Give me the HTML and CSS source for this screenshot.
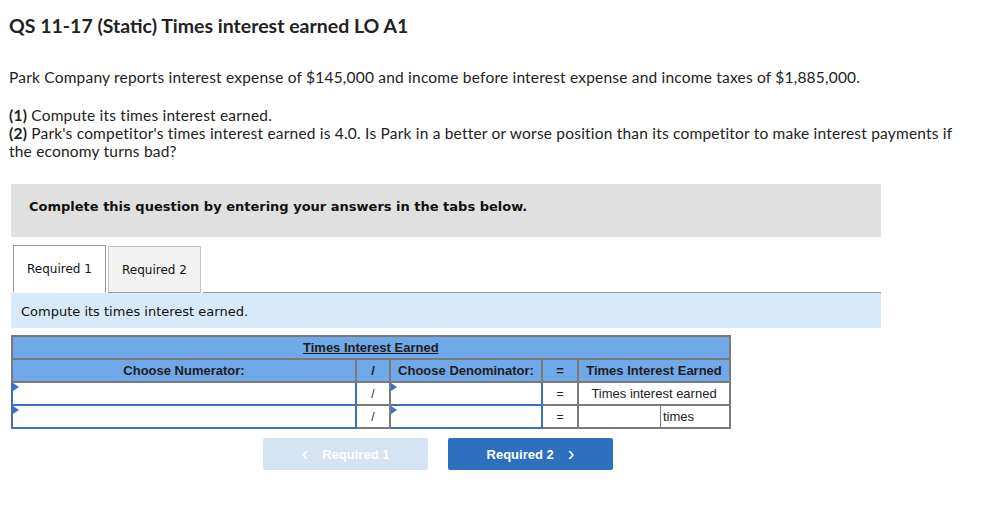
FILE: index.html
```html
<!DOCTYPE html>
<html>
<head>
<meta charset="utf-8">
<link rel="stylesheet" href="styles.css">
</head>
<body>
<div class="page">
  <h1 class="title">QS 11-17 (Static) Times interest earned LO A1</h1>
  <p class="intro">Park Company reports interest expense of $145,000 and income before interest expense and income taxes of $1,885,000.</p>
  <p class="reqs"><b>(1)</b> Compute its times interest earned.<br><b>(2)</b> Park's competitor's times interest earned is 4.0. Is Park in a better or worse position than its competitor to make interest payments if the economy turns bad?</p>

  <div class="instr">Complete this question by entering your answers in the tabs below.</div>

  <div class="tabs">
    <div class="tab active">Required 1</div>
    <div class="tab">Required 2</div>
    <div class="tabline"></div>
  </div>
  <div class="prompt">Compute its times interest earned.</div>

  <table class="calc">
    <tr class="hd"><th colspan="5" class="cap"><u>Times Interest Earned</u></th></tr>
    <tr class="hd">
      <th class="c-num">Choose Numerator:</th>
      <th class="c-op">/</th>
      <th class="c-den">Choose Denominator:</th>
      <th class="c-eq">=</th>
      <th class="c-res">Times Interest Earned</th>
    </tr>
    <tr>
      <td class="inp"><span class="flag"></span></td>
      <td class="op">/</td>
      <td class="inp"><span class="flag"></span></td>
      <td class="op">=</td>
      <td class="res">Times interest earned</td>
    </tr>
    <tr>
      <td class="inp"><span class="flag"></span></td>
      <td class="op">/</td>
      <td class="inp"><span class="flag"></span></td>
      <td class="op">=</td>
      <td class="split"><div class="splitrow"><span class="blank"></span><span class="unit">times</span></div></td>
    </tr>
  </table>

  <div class="nav">
    <div class="btn disabled"><span class="chev">&lsaquo;</span>Required 1</div>
    <div class="btn primary">Required 2<span class="chev r">&rsaquo;</span></div>
  </div>
</div>
</body>
</html>
```
FILE: styles.css
```css
html, body { margin: 0; padding: 0; background: #fff; }
.page { padding: 0 0 0 9px; font-family: "Lato", "Liberation Sans", sans-serif; color: #222; }
.title { margin: 0; padding-top: 15px; font-size: 19.5px; font-weight: 700; line-height: 22px; height: 22px; color: #222; }
.intro { margin: 31px 0 0; font-size: 15.5px; letter-spacing: 0.2px; line-height: 18px; }
.reqs { margin: 20px 0 0; font-size: 15.5px; letter-spacing: 0.2px; line-height: 18px; padding-right: 18px; }
.reqs b { font-weight: 700; }
.instr { margin: 24px 0 0 2px; width: 852px; height: 45px; padding-bottom: 8px; background: #e0e0e0; padding-left: 18px; font-family: "DejaVu Sans", Verdana, sans-serif; font-weight: 700; font-size: 13px; color: #111; display: flex; align-items: center; }
.tabs { display: flex; align-items: flex-end; margin: 8px 0 0 2px; width: 870px; height: 48px; }
.tab { box-sizing: border-box; height: 47px; width: 93px; border: 1px solid #c4c4c4; border-bottom: 1px solid #999; background: #f2f2f2; font-family: "DejaVu Sans", Verdana, sans-serif; font-size: 12px; line-height: 47px; text-align: center; color: #111; margin-right: 2px; }
.tab.active { background: #fff; border: 1px solid #999; border-bottom: 1px solid #fff; height: 48px; margin-left: 2px; width: 93px; }
.tabline { flex: 1; border-bottom: 1px solid #999; height: 0; }
.prompt { margin-left: 2px; width: 860px; height: 35px; background: #d6eaf9; padding-left: 10px; font-family: "DejaVu Sans", Verdana, sans-serif; font-size: 13px; line-height: 37px; color: #111; }
.calc { margin: 7px 0 0 2px; border-collapse: collapse; font-family: "Liberation Sans", Arial, sans-serif; font-size: 13px; color: #222; }
.calc th, .calc td { border: 2px solid #7a7a7a; padding: 0; height: 21px; }
.hd th { background: #70a8e8; font-weight: 700; color: #1e1e1e; }
.cap { text-align: left; padding-left: 290px !important; }
.c-num { width: 342px; }
.c-op { width: 32px; }
.c-den { width: 150px; }
.c-eq { width: 34px; }
.c-res { width: 150px; }
.calc td.inp { position: relative; border: 2px solid #3a72c2; background: #fff; }
.flag { position: absolute; left: 0; top: 0; width: 0; height: 0; border-top: 4px solid transparent; border-bottom: 4px solid transparent; border-left: 6px solid #3a72c2; }
.calc td.op { text-align: center; font-size: 12px; }
.calc td.res { text-align: center; }
.calc td.split { padding: 0; }
.splitrow { display: flex; height: 21px; }
.blank { width: 81px; border-right: 1px solid #7a7a7a; }
.unit { padding-left: 2px; line-height: 21px; }
.nav { display: flex; gap: 20px; margin: 9px 0 0 254px; }
.btn { box-sizing: border-box; width: 165px; height: 32px; border-radius: 2px; font-family: "Liberation Sans", Arial, sans-serif; font-weight: 700; font-size: 13px; color: #fff; display: flex; align-items: center; justify-content: center; }
.btn.disabled { background: #d5e3f3; }
.btn.primary { background: #2d70c0; }
.chev { font-size: 20px; font-weight: 400; margin-right: 14px; line-height: 1; position: relative; top: -1px; }
.chev.r { margin-right: 0; margin-left: 14px; }
```
